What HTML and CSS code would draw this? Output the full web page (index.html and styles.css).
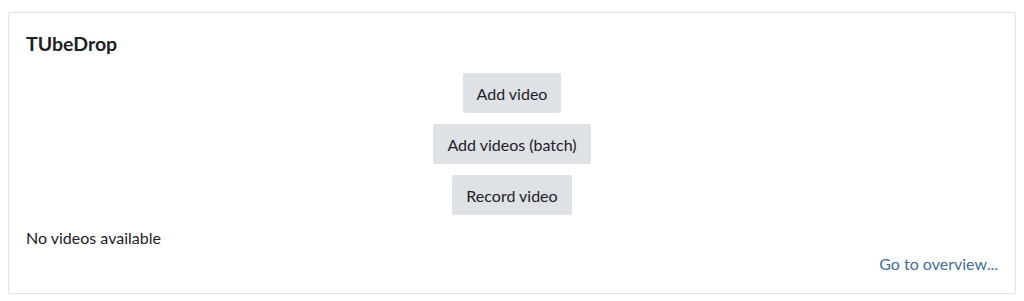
FILE: index.html
```html
<!DOCTYPE html>
<html lang="en">
  <head>
    <meta charset="UTF-8" />
    <title>TUbeDrop</title>
    <link rel="stylesheet" href="styles.css">
  </head>
  <body>
    <div class="card">
      <h5 class="card-title">TUbeDrop</h5>
      <div class="actions">
        <button class="btn">Add video</button>
        <button class="btn">Add videos (batch)</button>
        <button class="btn">Record video</button>
      </div>
      <p class="empty">No videos available</p>
      <div class="footer">
        <a href="#" class="overview">Go to overview...</a>
      </div>
    </div>
  </body>
</html>
```
FILE: styles.css
```css
body {
    font-family: Lato, "Liberation Sans", sans-serif;
    font-size: 16px;
    color: #1d2125;
    margin: 0;
    padding: 12px 8px 8px 8px;
    background: #fff;
}

.card {
    border: 1px solid #dee2e6;
    border-radius: 2px;
    padding: 18px 17px 16px 17px;
    height: 246px;
}

.card-title {
    font-size: 19.5px;
    font-weight: bold;
    margin: 0 0 16px 0;
    line-height: 26px;
}

.actions {
    display: flex;
    flex-direction: column;
    align-items: center;
    gap: 11px;
}

.btn {
    font-family: inherit;
    font-size: 16px;
    color: #1d2125;
    background: #dee2e6;
    border: none;
    border-radius: 2px;
    height: 40px;
    padding: 0 14px;
}

.empty {
    margin: 13px 0 0 0;
    line-height: 20px;
}

.footer {
    text-align: right;
    margin-top: 6px;
}

.overview {
    color: #3d6f98;
    text-decoration: none;
    line-height: 20px;
}
```
